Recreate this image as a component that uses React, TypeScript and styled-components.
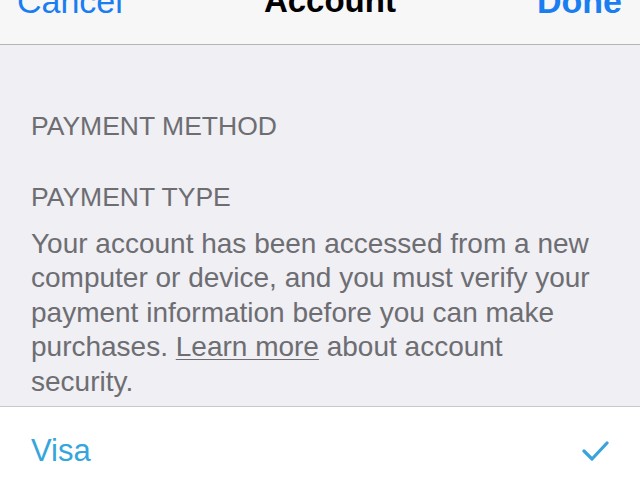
import React from 'react';
import styled, { createGlobalStyle } from 'styled-components';

const GlobalStyle = createGlobalStyle`
  html, body {
    margin: 0;
    padding: 0;
    background: #efeff4;
  }
  body {
    font-family: "Liberation Sans", Arial, Helvetica, sans-serif;
    -webkit-font-smoothing: antialiased;
  }
`;

const Screen = styled.div`
  width: 640px;
  height: 481px;
  overflow: hidden;
  display: flex;
  flex-direction: column;
  background: #efeff4;
`;

const NavBar = styled.header`
  height: 44px;
  flex-shrink: 0;
  background: #f7f7f8;
  border-bottom: 1px solid #b4b4b8;
  display: flex;
  justify-content: space-between;
  align-items: flex-start;
  padding: 0 18px 0 17px;
  overflow: hidden;
`;

const NavButton = styled.span<{ $bold?: boolean }>`
  margin-top: -16px;
  font-size: 34px;
  line-height: 34px;
  color: #1a7ef0;
  font-weight: ${(p) => (p.$bold ? 700 : 400)};
`;

const NavTitle = styled.span`
  margin-top: -16px;
  font-size: 33px;
  line-height: 34px;
  font-weight: 700;
  color: #000;
`;

const Content = styled.main`
  flex-shrink: 0;
  padding: 64px 31px 7px 31px;
`;

const SectionHeader = styled.h2<{ $gap?: number }>`
  margin: 0 0 ${(p) => p.$gap ?? 0}px;
  font-size: 26.5px;
  line-height: 34px;
  font-weight: 400;
  color: #6d6d72;
`;

const Footnote = styled.p`
  margin: 13px 0 0;
  font-size: 28px;
  line-height: 34.4px;
  color: #6d6d72;
`;

const Link = styled.a`
  color: inherit;
  text-decoration: underline;
  text-underline-offset: 3px;
  text-decoration-thickness: 1px;
`;

const OptionRow = styled.div`
  flex-shrink: 0;
  height: 88px;
  background: #fff;
  border-top: 1px solid #c8c7cc;
  display: flex;
  align-items: center;
  justify-content: space-between;
  padding: 0 30px 0 31px;
`;

const OptionLabel = styled.span`
  font-size: 31px;
  color: #34a6db;
`;

const Check = () => (
  <svg width="28" height="22" viewBox="0 0 28 22" fill="none">
    <polyline
      points="2,11 10,19 25,3"
      stroke="#3aa3da"
      strokeWidth="3.2"
      strokeLinecap="round"
      strokeLinejoin="round"
    />
  </svg>
);

const App: React.FC = () => {
  return (
    <>
      <GlobalStyle />
      <Screen>
        <NavBar>
          <NavButton>Cancel</NavButton>
          <NavTitle>Account</NavTitle>
          <NavButton $bold>Done</NavButton>
        </NavBar>
        <Content>
          <SectionHeader $gap={37}>PAYMENT METHOD</SectionHeader>
          <SectionHeader>PAYMENT TYPE</SectionHeader>
          <Footnote>
            Your account has been accessed from a new computer or device, and you must
            verify your payment information before you can make purchases.{' '}
            <Link href="#">Learn more</Link> about account security.
          </Footnote>
        </Content>
        <OptionRow>
          <OptionLabel>Visa</OptionLabel>
          <Check />
        </OptionRow>
      </Screen>
    </>
  );
};

export default App;
